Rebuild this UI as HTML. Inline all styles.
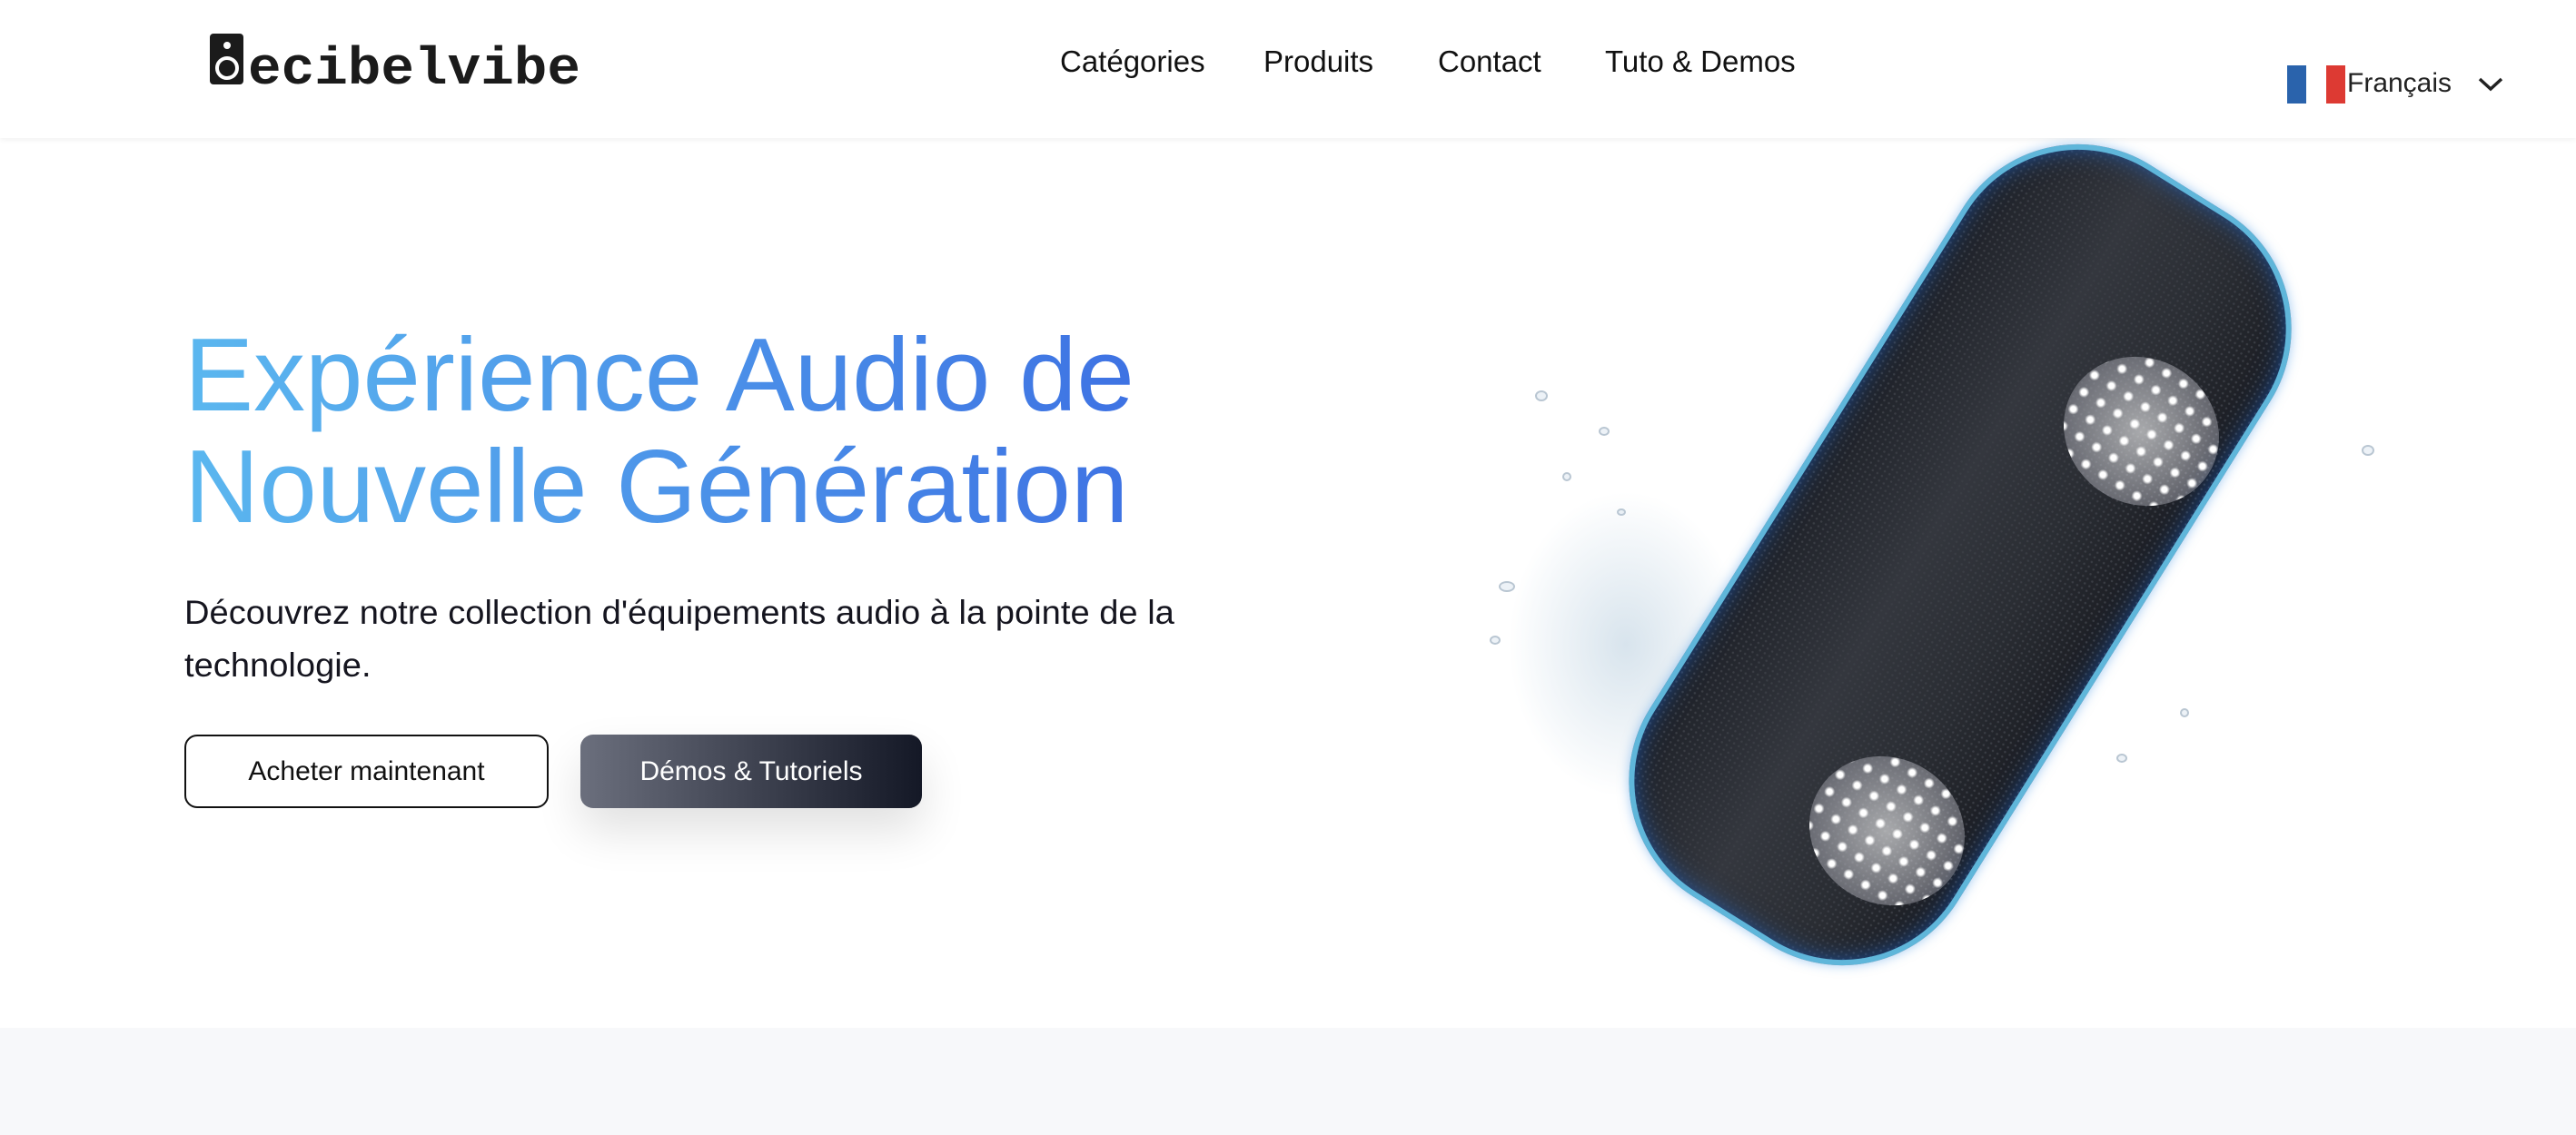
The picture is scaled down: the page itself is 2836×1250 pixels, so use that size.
<!DOCTYPE html>
<html><head><meta charset="utf-8">
<style>
*{margin:0;padding:0;box-sizing:border-box}
html,body{width:2836px;height:1250px;overflow:hidden;background:#fff;font-family:"Liberation Sans",sans-serif;color:#111}
.nav{position:absolute;left:0;top:0;width:2836px;height:152px;background:#fff;box-shadow:0 2px 6px rgba(0,0,0,.06);z-index:5}
.logo{position:absolute;left:231px;top:38px;height:57px;display:flex;align-items:flex-end}
.links{position:absolute;top:49px;left:1167px;font-size:33px;color:#111}
.links span{position:absolute;white-space:nowrap}
.lang{position:absolute;left:2518px;top:72px;display:flex;align-items:center}
.flag{width:64px;height:42px;display:flex}
.flag i{flex:1}
.lang b{font-weight:normal;font-size:30px;color:#222;margin-left:2px;margin-top:-2px}
h1{position:absolute;left:203px;top:352px;font-size:114px;line-height:123px;font-weight:normal;letter-spacing:0px;background:linear-gradient(90deg,#5bb7ef,#3e72e3 1050px);-webkit-background-clip:text;background-clip:text;color:transparent;white-space:nowrap}
.p{position:absolute;left:203px;top:646px;font-size:37px;line-height:58px;color:#15151f;white-space:nowrap;transform:scaleX(1.03);transform-origin:left top}
.btn{position:absolute;top:809px;height:81px;border-radius:14px;font-size:30px;display:flex;align-items:center;justify-content:center}
.b1{left:203px;width:401px;border:2px solid #111;color:#111}
.b2{left:639px;width:376px;background:linear-gradient(90deg,#6b6f7d,#141826);color:#fff;box-shadow:0 25px 50px rgba(0,0,0,.12)}
.gray{position:absolute;left:0;top:1132px;width:2836px;height:118px;background:#f7f8fa}
.spk{position:absolute;left:1958px;top:136px;width:400px;height:950px;border-radius:150px;transform:rotate(32deg);background:
radial-gradient(circle,#3a3d44 1px,transparent 1.5px) 0 0/6px 6px,linear-gradient(90deg,#1d2027,#34373e 40%,#2a2d33 70%,#1a1c22);
box-shadow:inset 0 0 0 6px #5fb6da,inset 0 0 30px #1d63c8,0 0 12px rgba(70,150,230,.5)}
.led{position:absolute;width:175px;height:160px;border-radius:50%;background:radial-gradient(circle,#fff 3px,transparent 6px) 0 0/22px 22px,radial-gradient(circle,rgba(255,255,255,.6),rgba(200,200,210,.4) 70%,transparent);}
.drop{position:absolute;border-radius:50%;border:2px solid #b9c6d2;background:rgba(220,230,240,.5)}
</style></head><body>
<div class="nav">
  <div class="logo">
    <svg width="410" height="60" viewBox="0 0 410 60">
      <rect x="0" y="2" width="37" height="56" rx="4" fill="#1b1b1b"/>
      <circle cx="19" cy="15" r="4" fill="#fff"/>
      <circle cx="19" cy="40" r="11" fill="none" stroke="#fff" stroke-width="4"/>
      <text x="42" y="57" font-family="Liberation Mono,monospace" font-weight="bold" font-size="58" fill="#1b1b1b" textLength="366" lengthAdjust="spacingAndGlyphs">ecibelvibe</text>
    </svg>
  </div>
  <div class="links">
    <span style="left:0">Catégories</span>
    <span style="left:224px">Produits</span>
    <span style="left:416px">Contact</span>
    <span style="left:600px">Tuto &amp; Demos</span>
  </div>
  <div class="lang">
    <div class="flag"><i style="background:#2a63ac"></i><i style="background:#fff"></i><i style="background:#dd3a33"></i></div>
    <b>Français</b>
    <svg style="margin-left:28px" width="30" height="20" viewBox="0 0 30 20"><path d="M3 4 L15 15 L27 4" fill="none" stroke="#222" stroke-width="3.5"/></svg>
  </div>
</div>

<h1>Expérience Audio de<br>Nouvelle Génération</h1>
<div class="p">Découvrez notre collection d'équipements audio à la pointe de la<br>technologie.</div>
<div class="btn b1">Acheter maintenant</div>
<div class="btn b2">Démos &amp; Tutoriels</div>

<div class="drop" style="left:1690px;top:430px;width:14px;height:12px"></div>
<div class="drop" style="left:1650px;top:640px;width:18px;height:12px"></div>
<div class="drop" style="left:1720px;top:520px;width:10px;height:10px"></div>
<div class="drop" style="left:1760px;top:470px;width:12px;height:10px"></div>
<div class="drop" style="left:1640px;top:700px;width:12px;height:10px"></div>
<div class="drop" style="left:1780px;top:560px;width:10px;height:8px"></div>
<div class="drop" style="left:2600px;top:490px;width:14px;height:12px"></div>
<div class="drop" style="left:2330px;top:830px;width:12px;height:10px"></div>
<div class="drop" style="left:2400px;top:780px;width:10px;height:10px"></div>
<div style="position:absolute;left:1660px;top:540px;width:260px;height:340px;background:radial-gradient(ellipse,rgba(190,210,225,.6),transparent 70%)"></div>

<div class="spk"></div>
<div class="led" style="left:2270px;top:395px;transform:rotate(32deg)"></div>
<div class="led" style="left:1990px;top:835px;transform:rotate(32deg)"></div>

<div class="gray"></div>
</body></html>
